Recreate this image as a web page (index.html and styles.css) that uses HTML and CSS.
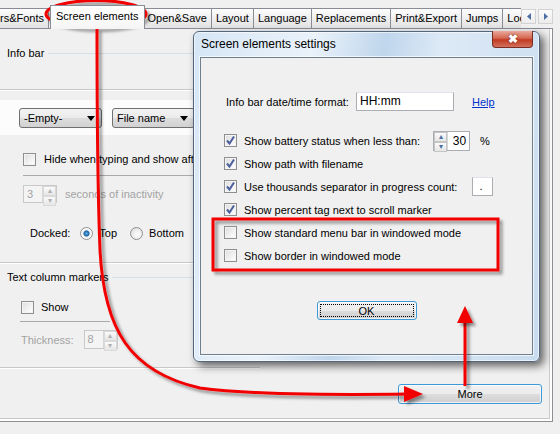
FILE: index.html
```html
<!DOCTYPE html>
<html lang="en">
<head>
  <meta charset="UTF-8">
  <title>Screen elements settings</title>
  <link rel="stylesheet" href="styles.css">
</head>
<body>

  <div class="tabbar">
    <div class="tabs">
      <div class="tab tab-cut"><span>Colors&amp;Fonts</span></div>
      <div class="tab active">Screen elements</div>
      <div class="tab">Open&amp;Save</div>
      <div class="tab">Layout</div>
      <div class="tab">Language</div>
      <div class="tab">Replacements</div>
      <div class="tab">Print&amp;Export</div>
      <div class="tab">Jumps</div>
      <div class="tab">Look</div>
    </div>
    <div class="tab-scroll">
      <span class="scroll-btn"><svg width="6" height="7" viewBox="0 0 6 7"><path d="M5 0 L1 3.5 L5 7 Z" fill="#4b6ea3"/></svg></span>
      <span class="scroll-btn"><svg width="6" height="7" viewBox="0 0 6 7"><path d="M1 0 L5 3.5 L1 7 Z" fill="#4b6ea3"/></svg></span>
    </div>
  </div>

  <div class="page">
    <div class="left">
      <div class="grp-head"><span>Info bar</span><i></i></div>
      <div class="rule"></div>
      <div class="band">
        <div class="combo">-Empty-<b></b></div>
        <div class="combo">File name<b></b></div>
      </div>
      <div class="row check-row">
        <span class="cb"></span>
        <span>Hide when typing and show after</span>
      </div>
      <div class="sep sep-a"></div>
      <div class="row spin-row">
        <span class="spin off"><em>3</em><span class="arrows"><span>&#9652;</span><span>&#9662;</span></span></span>
        <span class="dim">seconds of inactivity</span>
      </div>
      <div class="row radio-row">
        <span>Docked:</span>
        <span class="radio on"></span><span>Top</span>
        <span class="radio"></span><span>Bottom</span>
      </div>
      <div class="rule rule-b"></div>
      <div class="grp-head grp-b"><span>Text column markers</span><i></i></div>
      <div class="row show-row">
        <span class="cb"></span>
        <span>Show</span>
      </div>
      <div class="sep sep-b"></div>
      <div class="row thick-row">
        <span class="dim">Thickness:</span>
        <span class="spin off"><em>8</em><span class="arrows"><span>&#9652;</span><span>&#9662;</span></span></span>
      </div>
      <div class="rule rule-c"></div>
    </div>
    <div class="page-foot">
      <button class="btn more">More</button>
    </div>
  </div>

  <div class="dialog">
    <div class="dlg-title">Screen elements settings</div>
    <span class="close-btn">&#10006;</span>
    <div class="dlg-body">
      <div class="fmt-row">
        <label class="fmt-label">Info bar date/time format:</label>
        <span class="field fmt-field">HH:mm</span>
        <a class="help" href="#">Help</a>
      </div>

      <div class="opt first">
        <span class="cb checked"><svg width="11" height="11" viewBox="0 0 11 11"><path d="M2 5.5 L4.5 8.5 L9 1.5" fill="none" stroke="#4a5f9c" stroke-width="2"/></svg></span>
        <span>Show battery status when less than:</span>
        <span class="spin battery"><span class="arrows"><span>&#9652;</span><span>&#9662;</span></span><em>30</em></span>
        <span class="pct">%</span>
      </div>
      <div class="opt">
        <span class="cb checked"><svg width="11" height="11" viewBox="0 0 11 11"><path d="M2 5.5 L4.5 8.5 L9 1.5" fill="none" stroke="#4a5f9c" stroke-width="2"/></svg></span>
        <span>Show path with filename</span>
      </div>
      <div class="opt">
        <span class="cb checked"><svg width="11" height="11" viewBox="0 0 11 11"><path d="M2 5.5 L4.5 8.5 L9 1.5" fill="none" stroke="#4a5f9c" stroke-width="2"/></svg></span>
        <span>Use thousands separator in progress count:</span>
        <span class="field sep-field">.</span>
      </div>
      <div class="opt">
        <span class="cb checked"><svg width="11" height="11" viewBox="0 0 11 11"><path d="M2 5.5 L4.5 8.5 L9 1.5" fill="none" stroke="#4a5f9c" stroke-width="2"/></svg></span>
        <span>Show percent tag next to scroll marker</span>
      </div>
      <div class="opt">
        <span class="cb"></span>
        <span>Show standard menu bar in windowed mode</span>
      </div>
      <div class="opt">
        <span class="cb"></span>
        <span>Show border in windowed mode</span>
      </div>

      <div class="ok-row">
        <button class="btn ok">OK</button>
      </div>
    </div>
  </div>

  <svg class="marks" width="560" height="434" viewBox="0 0 560 434">
    <defs>
      <filter id="sh" x="-10%" y="-10%" width="130%" height="130%">
        <feDropShadow dx="3" dy="3" stdDeviation="1.5" flood-color="#000" flood-opacity="0.4"/>
      </filter>
    </defs>
    <g filter="url(#sh)" stroke="#f20000" fill="none" stroke-width="3">
      <ellipse cx="96" cy="14" rx="50" ry="13.5"/>
      <path d="M97 28 C97 120 98 200 100 250 C104 330 130 372 200 388 C250 395 330 395 408 394"/>
      <rect x="213" y="219" width="285" height="51"/>
      <path d="M465 386 L465 318"/>
    </g>
    <g filter="url(#sh)" fill="#f20000">
      <path d="M404 386 L423 394 L404 402 Z"/>
      <path d="M457 323 L465 306 L473 323 Z"/>
    </g>
  </svg>

</body>
</html>
```

FILE: styles.css
```css
body {
  margin: 0;
  width: 560px;
  height: 434px;
  overflow: hidden;
  position: relative;
  background-color: #f0f0f0;
  font-family: 'Liberation Sans', Arial, sans-serif;
  font-size: 11px;
  color: #000;
}

/* tab strip */

.tabbar {
  display: flex;
  width: 553px;
  height: 29px;
  background: linear-gradient(#898c95, #898c95) left bottom / 100% 1px no-repeat;
}

.tabs {
  display: flex;
  align-items: flex-end;
  width: 523px;
  height: 29px;
  overflow: hidden;
}

.tab {
  flex: none;
  height: 19px;
  line-height: 19px;
  padding: 0 4px;
  margin: 0 0 1px -1px;
  border: 1px solid #898c95;
  border-bottom: none;
  background: linear-gradient(#fdfdfd, #efefef 50%, #e2e2e2);
  white-space: nowrap;
}

.tab-cut {
  display: flex;
  justify-content: flex-end;
  width: 40px;
  overflow: hidden;
  margin-left: 0;
  border-left: none;
}

.tab.active {
  position: relative;
  z-index: 1;
  height: 23px;
  line-height: 21px;
  padding: 0 5px;
  margin: 0 -1px 0 1px;
  background: linear-gradient(#ffffff, #fbfbfb 60%, #f4f4f4);
}

.tab-scroll {
  display: flex;
  gap: 2px;
  margin-top: 9px;
}

.scroll-btn {
  display: flex;
  align-items: center;
  justify-content: center;
  width: 13px;
  height: 13px;
  border: 1px solid #d2d2d2;
  background: linear-gradient(#fbfbfb, #ececec);
}

/* page under the tabs */

.page {
  display: flex;
  flex-direction: column;
  width: 552px;
  height: 392px;
  border-right: 1px solid #8e9096;
  border-bottom: 1px solid #8e9096;
  box-shadow: inset -2px -2px 0 #fff, inset -3px -3px 0 #c9c9c9;
}

.left {
  display: flex;
  flex-direction: column;
  width: 260px;
}

.grp-head {
  display: flex;
  align-items: center;
  gap: 4px;
  height: 14px;
  margin-top: 17px;
  padding-left: 7px;
}

.grp-head i {
  flex: 1;
  border-top: 1px solid #d5dfe5;
}

.grp-b {
  margin-top: 6px;
}

.rule {
  margin-top: 29px;
  border-top: 1px solid #c9c9c9;
  border-bottom: 1px solid #fff;
}

.rule-b {
  margin-top: 21px;
}

.rule-c {
  margin-top: 18px;
}

.band {
  display: flex;
  gap: 10px;
  height: 35px;
  margin-top: 9px;
  padding: 8px 0 0 19px;
  box-sizing: border-box;
  background-color: #fcfcfc;
}

.combo {
  position: relative;
  width: 83px;
  height: 20px;
  line-height: 18px;
  padding-left: 4px;
  box-sizing: border-box;
  border: 1px solid #707070;
  border-radius: 3px;
  background: linear-gradient(#f3f3f3, #ebebeb 50%, #dddddd 51%, #d2d2d2);
}

.combo b {
  position: absolute;
  right: 6px;
  top: 7px;
  border-left: 4px solid transparent;
  border-right: 4px solid transparent;
  border-top: 5px solid #000;
}

.row {
  display: flex;
  align-items: center;
  white-space: nowrap;
}

.check-row {
  height: 16px;
  margin-top: 16px;
  padding-left: 23px;
  gap: 8px;
}

.sep {
  border-top: 1px solid #a9a9a9;
}

.sep-a {
  margin: 8px 0 0 23px;
}

.sep-b {
  width: 90px;
  margin: 6px 0 0 20px;
}

.spin-row {
  height: 18px;
  margin-top: 9px;
  padding-left: 23px;
  gap: 8px;
}

.radio-row {
  height: 16px;
  margin-top: 22px;
  padding-left: 30px;
}

.radio-row .radio {
  margin: 0 6px 0 10px;
}

.radio-row .radio + span + .radio {
  margin-left: 13px;
}

.show-row {
  height: 16px;
  margin-top: 15px;
  padding-left: 21px;
  gap: 7px;
}

.thick-row {
  height: 19px;
  margin-top: 8px;
  padding-left: 21px;
  gap: 6px;
}

.dim {
  color: #a3a3a3;
}

/* small controls */

.cb {
  flex: none;
  display: flex;
  align-items: center;
  justify-content: center;
  width: 11px;
  height: 11px;
  border: 1px solid #8f8f8f;
  background: linear-gradient(135deg, #dcdcdc, #f6f6f6 70%, #fff);
  box-shadow: inset 0 0 0 1px #f4f4f4;
}

.radio {
  flex: none;
  width: 11px;
  height: 11px;
  border: 1px solid #8f8f8f;
  border-radius: 50%;
  background: radial-gradient(circle at 60% 60%, #fff, #d8d8d8);
}

.radio.on {
  background: radial-gradient(circle, #66b6ec 0, #1862a6 2.5px, #eaeaea 3.5px, #ffffff 5px);
}

.spin {
  flex: none;
  display: flex;
  align-items: stretch;
  box-sizing: border-box;
  border: 1px solid #abadb3;
  background-color: #fff;
}

.spin em {
  flex: 1;
  font-style: normal;
  line-height: 16px;
  padding: 0 3px;
}

.spin .arrows {
  display: flex;
  flex-direction: column;
  width: 13px;
  border-left: 1px solid #d6d6d6;
}

.spin .arrows span {
  flex: 1;
  display: flex;
  align-items: center;
  justify-content: center;
  font-size: 8px;
  line-height: 1;
  color: #4b6ea3;
  background: linear-gradient(#fafafa, #e6e6e6);
  border: 1px solid #c5c5c5;
}

.spin.off {
  width: 34px;
  height: 18px;
  border-color: #c9c9c9;
  background-color: #f4f4f4;
  color: #a3a3a3;
}

.spin.off .arrows span {
  color: #b0b0b0;
  border-color: #dadada;
}

.thick-row .spin.off {
  height: 19px;
  margin-left: 4px;
}

.battery {
  width: 37px;
  height: 20px;
}

.battery .arrows {
  border-left: none;
  border-right: 1px solid #d6d6d6;
}

.battery em {
  text-align: right;
  line-height: 18px;
  font-size: 12px;
}

.field {
  display: inline-block;
  box-sizing: border-box;
  border: 1px solid #abadb3;
  border-top-color: #e2e3ea;
  background-color: #fff;
}

/* buttons */

.btn {
  font-family: 'Liberation Sans', Arial, sans-serif;
  font-size: 11px;
  color: #000;
  height: 20px;
  padding: 0;
  border: 1px solid #3c9ad8;
  border-radius: 3px;
  background: linear-gradient(#f2f2f2, #ebebeb 50%, #dddddd 51%, #cfcfcf);
  box-shadow: inset 0 0 0 1px rgba(255, 255, 255, 0.7);
}

.page-foot {
  display: flex;
  justify-content: flex-end;
  margin-top: 15px;
  padding-right: 10px;
}

.more {
  width: 144px;
}

.ok {
  width: 100px;
  height: 19px;
  outline: 1px dotted #000;
  outline-offset: -4px;
}

/* dialog */

.dialog {
  position: absolute;
  left: 193px;
  top: 31px;
  width: 347px;
  height: 331px;
  box-sizing: border-box;
  display: flex;
  flex-direction: column;
  padding: 0 6px 6px 6px;
  border: 1px solid #52677d;
  border-radius: 6px;
  background: linear-gradient(100deg, #d6e6f5 0%, #eaf2fa 30%, #bfd6ec 48%, #dde9f6 62%, #c8dcef 100%);
  box-shadow: 4px 4px 8px rgba(0, 0, 0, 0.6), inset 0 0 0 1px rgba(255, 255, 255, 0.6);
}

.dlg-title {
  height: 25px;
  line-height: 25px;
  padding-left: 1px;
  font-size: 12px;
}

.close-btn {
  position: absolute;
  right: 6px;
  top: -1px;
  width: 41px;
  height: 17px;
  box-sizing: border-box;
  display: flex;
  align-items: center;
  justify-content: center;
  border: 1px solid #7a2d22;
  border-top: none;
  border-radius: 0 0 4px 4px;
  background: linear-gradient(#e9a99c, #d4664f 45%, #c13a22 55%, #d3705c);
  color: #fff;
  font-size: 12px;
  font-weight: bold;
  text-shadow: 0 0 2px #6a1c10;
}

.dlg-body {
  flex: 1;
  display: flex;
  flex-direction: column;
  border: 1px solid #6f7f8e;
  background-color: #f0f0f0;
  box-shadow: 0 0 0 1px rgba(255, 255, 255, 0.7);
}

.fmt-row {
  display: flex;
  align-items: center;
  height: 19px;
  margin-top: 34px;
  padding-left: 25px;
}

.fmt-label {
  width: 130px;
}

.fmt-field {
  width: 98px;
  height: 19px;
  line-height: 17px;
  padding-left: 3px;
  font-size: 12px;
}

.help {
  margin-left: 18px;
  color: #0033cc;
}

.opt {
  display: flex;
  align-items: center;
  height: 23px;
  padding-left: 23px;
  gap: 7px;
  white-space: nowrap;
}

.opt.first {
  margin-top: 18px;
}

.opt .battery {
  margin-left: 6px;
}

.opt .pct {
  margin-left: 3px;
}

.sep-field {
  width: 21px;
  height: 19px;
  margin-left: 8px;
  line-height: 17px;
  padding-left: 6px;
}

.ok-row {
  display: flex;
  justify-content: center;
  margin-top: 34px;
}

/* red annotation layer */

.marks {
  position: absolute;
  left: 0;
  top: 0;
  pointer-events: none;
}
```
